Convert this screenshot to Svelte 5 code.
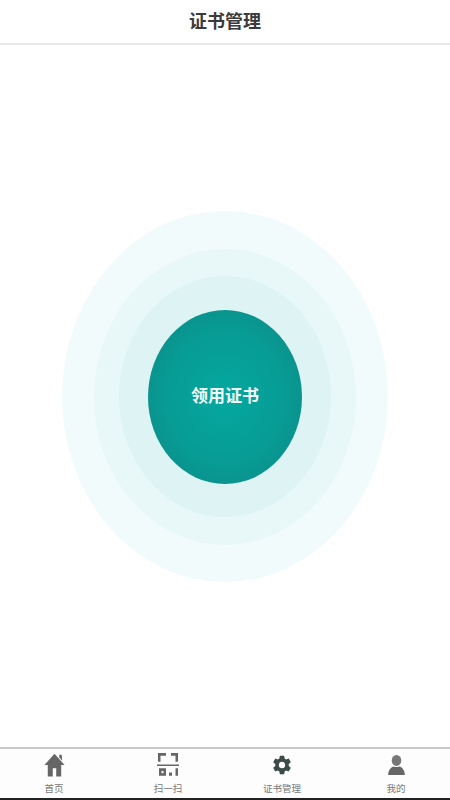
<script>
  const tabs = [
    { label: '首页', icon: 'home', w: 23, h: 26 },
    { label: '扫一扫', icon: 'scan', w: 24, h: 26 },
    { label: '证书管理', icon: 'gear', w: 20, h: 20 },
    { label: '我的', icon: 'user', w: 19, h: 22 }
  ]
</script>

<div class="page">
  <header class="title">证书管理</header>

  <main class="content">
    <div class="ring ring-1">
      <div class="ring ring-2">
        <div class="ring ring-3">
          <button class="core">领用证书</button>
        </div>
      </div>
    </div>
  </main>

  <nav class="tabbar">
    {#each tabs as tab}
      <div class="tab">
        <div class="icon-box">
          <svg viewBox="0 0 24 24" width={tab.w} height={tab.h} preserveAspectRatio="none">
            {#if tab.icon === 'home'}
              <path fill="#666" d="M12 1.500 1.500 12H5v10.500h5.200V15h3.600v7.500H19V12h3.500zM17 2.500h2.500l.6 5.500L17 5z" />
            {:else if tab.icon === 'scan'}
              <path fill="#666" d="M2 1h8v2.500H4.500V9H2zM15 1h7v8h-2.500V3.500H15zM1 11.500h22v1.500H1zM3 15h7v7H3zm2.500 2.500v2h2v-2zM13 19h3v3h-3zM19.500 15H22v7h-2.500z" />
            {:else if tab.icon === 'gear'}
              <path fill="#3d4a4a" fill-rule="evenodd" d="M9.500 1h5l.7 3.300 1.700 1 3.200-1 2.500 4.300-2.500 2.200v2.400l2.500 2.200-2.500 4.300-3.200-1-1.700 1-.7 3.300h-5l-.7-3.300-1.700-1-3.200 1-2.500-4.300 2.500-2.200v-2.400L1.400 8.600l2.500-4.300 3.200 1 1.700-1zM12 8.200a3.800 3.800 0 1 0 0 7.600 3.800 3.800 0 0 0 0-7.600z" />
            {:else}
              <circle cx="12" cy="7" r="6" fill="#777" />
              <path fill="#666" d="M1.500 23c0-6 4-9 7-9.500 2 1 5 1 7 0 3 .5 7 3.500 7 9.500z" />
            {/if}
          </svg>
        </div>
        <span class="label">{tab.label}</span>
      </div>
    {/each}
  </nav>
</div>

<style>
  :global(body) {
    margin: 0;
    background: #fff;
  }

  .page {
    width: 450px;
    height: 800px;
    display: flex;
    flex-direction: column;
    font-family: "Noto Sans CJK SC", "Liberation Sans", sans-serif;
    overflow: hidden;
  }

  .title {
    height: 39px;
    flex: none;
    display: flex;
    align-items: center;
    justify-content: center;
    padding-bottom: 4px;
    border-bottom: 2px solid #e6e6e6;
    font-size: 18px;
    font-weight: 700;
    color: #3a3a3a;
  }

  .content {
    flex: 1;
    display: flex;
    justify-content: center;
    padding-top: 166px;
    box-sizing: border-box;
  }

  .ring {
    display: flex;
    align-items: center;
    justify-content: center;
    border-radius: 50%;
  }

  .ring-1 {
    width: 326px;
    height: 371px;
    background: #f1fbfb;
  }

  .ring-2 {
    width: 262px;
    height: 296px;
    background: #e8f7f8;
  }

  .ring-3 {
    width: 212px;
    height: 241px;
    background: #ddf3f4;
  }

  .core {
    width: 154px;
    height: 174px;
    padding: 0 0 4px;
    border: 0;
    border-radius: 50%;
    background: radial-gradient(closest-side, #04a89f, #079c95 75%, #0a948e);
    color: #f2fbfa;
    font-family: inherit;
    font-size: 17px;
    font-weight: 700;
  }

  .tabbar {
    height: 53px;
    flex: none;
    display: flex;
    margin: 0 -3px;
    box-sizing: border-box;
    border-top: 2px solid #c9c9c9;
    border-bottom: 2px solid #222;
    background: #fdfdfd;
  }

  .tab {
    flex: 1;
    display: flex;
    flex-direction: column;
    align-items: center;
    padding-top: 3px;
    gap: 3px;
  }

  .icon-box {
    height: 26px;
    display: flex;
    align-items: center;
    justify-content: center;
  }

  .label {
    font-size: 9.5px;
    line-height: 14px;
    color: #777;
  }
</style>
